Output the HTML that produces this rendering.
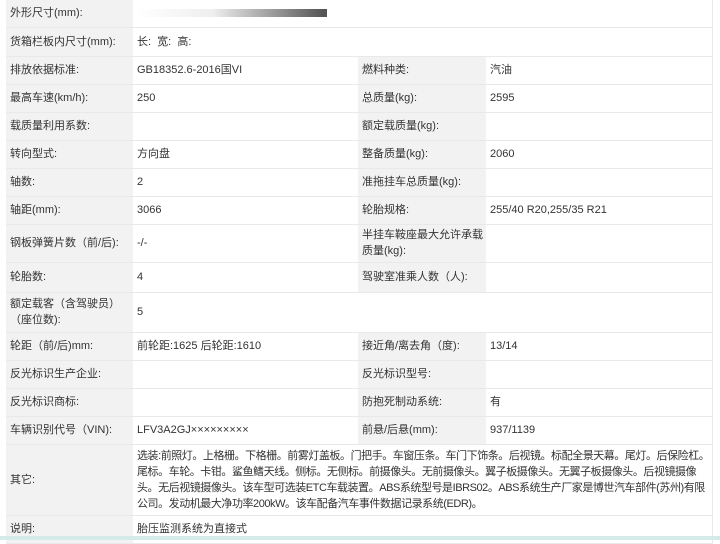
<!DOCTYPE html>
<html><head><meta charset="utf-8"><style>
body{margin:0;width:720px;height:540px;overflow:hidden;background:#fff;font-family:"Liberation Sans","Noto Sans CJK SC",sans-serif;font-size:11px;color:#333}
table{position:absolute;left:6px;top:0;border-collapse:collapse;width:706px;table-layout:fixed}
td{border-bottom:1px solid #e9e9e9;padding:0 0 0 4px;vertical-align:middle;line-height:16px}
td.l{background:#f2f2f2}
td.r{border-right:1px solid #e9e9e9}
.bar{display:inline-block;width:190px;height:8px;background:linear-gradient(90deg,#fff,#eee 40%,#555 98%);vertical-align:middle}
.band{position:absolute;left:0;top:536px;width:720px;height:4px;background:#d4ebea}
</style></head><body>
<table>
<colgroup><col style="width:127px"><col style="width:225px"><col style="width:128px"><col style="width:226px"></colgroup>
<tr style="height:27px"><td class="l">外形尺寸(mm):</td><td colspan="3" class="r"><span class="bar"></span></td></tr>
<tr style="height:29px"><td class="l">货箱栏板内尺寸(mm):</td><td colspan="3" class="r">长:&nbsp; 宽:&nbsp; 高:</td></tr>
<tr style="height:28px"><td class="l">排放依据标准:</td><td>GB18352.6-2016国VI</td><td class="l">燃料种类:</td><td class="r">汽油</td></tr>
<tr style="height:28px"><td class="l">最高车速(km/h):</td><td>250</td><td class="l">总质量(kg):</td><td class="r">2595</td></tr>
<tr style="height:28px"><td class="l">载质量利用系数:</td><td></td><td class="l">额定载质量(kg):</td><td class="r"></td></tr>
<tr style="height:28px"><td class="l">转向型式:</td><td>方向盘</td><td class="l">整备质量(kg):</td><td class="r">2060</td></tr>
<tr style="height:28px"><td class="l">轴数:</td><td>2</td><td class="l">准拖挂车总质量(kg):</td><td class="r"></td></tr>
<tr style="height:28px"><td class="l">轴距(mm):</td><td>3066</td><td class="l">轮胎规格:</td><td class="r">255/40 R20,255/35 R21</td></tr>
<tr style="height:38px"><td class="l">钢板弹簧片数（前/后):</td><td>-/-</td><td class="l">半挂车鞍座最大允许承载质量(kg):</td><td class="r"></td></tr>
<tr style="height:30px"><td class="l">轮胎数:</td><td>4</td><td class="l">驾驶室准乘人数（人):</td><td class="r"></td></tr>
<tr style="height:40px"><td class="l">额定载客（含驾驶员）（座位数):</td><td colspan="3" class="r">5</td></tr>
<tr style="height:28px"><td class="l">轮距（前/后)mm:</td><td>前轮距:1625 后轮距:1610</td><td class="l">接近角/离去角（度):</td><td class="r">13/14</td></tr>
<tr style="height:28px"><td class="l">反光标识生产企业:</td><td></td><td class="l">反光标识型号:</td><td class="r"></td></tr>
<tr style="height:28px"><td class="l">反光标识商标:</td><td></td><td class="l">防抱死制动系统:</td><td class="r">有</td></tr>
<tr style="height:28px"><td class="l">车辆识别代号（VIN):</td><td>LFV3A2GJ×××××××××</td><td class="l">前悬/后悬(mm):</td><td class="r">937/1139</td></tr>
<tr style="height:71px"><td class="l">其它:</td><td colspan="3" class="r" style="white-space:nowrap;overflow:hidden;letter-spacing:-0.45px">选装:前照灯。上格栅。下格栅。前雾灯盖板。门把手。车窗压条。车门下饰条。后视镜。标配全景天幕。尾灯。后保险杠。<br>尾标。车轮。卡钳。鲨鱼鳍天线。侧标。无侧标。前摄像头。无前摄像头。翼子板摄像头。无翼子板摄像头。后视镜摄像<br>头。无后视镜摄像头。该车型可选装ETC车载装置。ABS系统型号是IBRS02。ABS系统生产厂家是博世汽车部件(苏州)有限<br>公司。发动机最大净功率200kW。该车配备汽车事件数据记录系统(EDR)。</td></tr>
<tr style="height:28px"><td class="l">说明:</td><td colspan="3" class="r">胎压监测系统为直接式</td></tr>
</table>
<div class="band"></div>
</body></html>
